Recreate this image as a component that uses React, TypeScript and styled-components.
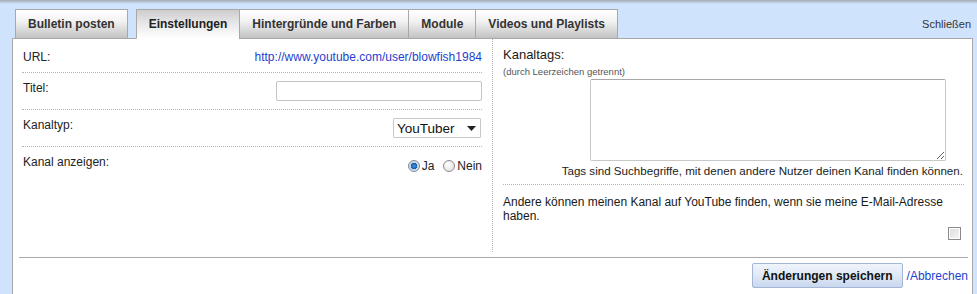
import React, { useState } from "react";
import styled, { createGlobalStyle, css } from "styled-components";

const GlobalStyle = createGlobalStyle`
  html, body {
    margin: 0;
    padding: 0;
  }
  body {
    font-family: "Liberation Sans", Arial, sans-serif;
    font-size: 12px;
    color: #222;
  }
`;

const tabs = [
  { id: "bulletin", label: "Bulletin posten" },
  { id: "settings", label: "Einstellungen" },
  { id: "colors", label: "Hintergründe und Farben" },
  { id: "modules", label: "Module" },
  { id: "videos", label: "Videos und Playlists" },
];

function App() {
  const [active, setActive] = useState("settings");
  const [title, setTitle] = useState("");
  const [tags, setTags] = useState("");
  const [channelType, setChannelType] = useState("YouTuber");
  const [visible, setVisible] = useState(true);
  const [findByMail, setFindByMail] = useState(false);

  return (
    <>
      <GlobalStyle />
      <Page>
        <Header>
          <TabList>
            {tabs.map((tab, i) => (
              <Tab
                key={tab.id}
                $active={tab.id === active}
                $spaced={i === 0}
                onClick={() => setActive(tab.id)}
              >
                {tab.label}
              </Tab>
            ))}
          </TabList>
          <CloseLink href="#">Schließen</CloseLink>
        </Header>

        <Panel>
          <Columns>
            <LeftColumn>
              <Row>
                <Label>URL:</Label>
                <Link href="#">http://www.youtube.com/user/blowfish1984</Link>
              </Row>
              <Row>
                <Label>Titel:</Label>
                <TextInput
                  type="text"
                  value={title}
                  onChange={(e) => setTitle(e.target.value)}
                />
              </Row>
              <Row>
                <Label>Kanaltyp:</Label>
                <SelectBox type="button" onClick={() => setChannelType("YouTuber")}>
                  <span>{channelType}</span>
                  <svg width="9" height="5" viewBox="0 0 9 5">
                    <path d="M0 0h9L4.5 5z" fill="#222" />
                  </svg>
                </SelectBox>
              </Row>
              <Row $last>
                <Label>Kanal anzeigen:</Label>
                <RadioGroup>
                  <RadioLabel>
                    <Radio
                      type="radio"
                      name="show"
                      checked={visible}
                      onChange={() => setVisible(true)}
                    />
                    Ja
                  </RadioLabel>
                  <RadioLabel>
                    <Radio
                      type="radio"
                      name="show"
                      checked={!visible}
                      onChange={() => setVisible(false)}
                    />
                    Nein
                  </RadioLabel>
                </RadioGroup>
              </Row>
            </LeftColumn>

            <RightColumn>
              <TagsSection>
                <BigLabel>Kanaltags:</BigLabel>
                <Hint>(durch Leerzeichen getrennt)</Hint>
                <TagsBox>
                  <TagsArea value={tags} onChange={(e) => setTags(e.target.value)} />
                </TagsBox>
                <HelpText>
                  Tags sind Suchbegriffe, mit denen andere Nutzer deinen Kanal finden können.
                </HelpText>
              </TagsSection>
              <MailSection>
                <MailText>
                  Andere können meinen Kanal auf YouTube finden, wenn sie meine E-Mail-Adresse
                  haben.
                </MailText>
                <CheckRow>
                  <Checkbox
                    type="checkbox"
                    checked={findByMail}
                    onChange={(e) => setFindByMail(e.target.checked)}
                  />
                </CheckRow>
              </MailSection>
            </RightColumn>
          </Columns>

          <Footer>
            <SaveButton type="button">Änderungen speichern</SaveButton>
            <CancelLink href="#">/Abbrechen</CancelLink>
          </Footer>
        </Panel>
      </Page>
    </>
  );
}

const Page = styled.div`
  min-height: 100vh;
  box-sizing: border-box;
  padding: 9px 4px 0 12px;
  background: linear-gradient(#a4a9b0 0, #c6d6ec 3px, #d0e3fc 4px) no-repeat;
  background-color: #d0e3fc;
  display: flex;
  flex-direction: column;
`;

const Header = styled.div`
  display: flex;
  align-items: center;
  justify-content: space-between;
  padding: 0 2px 0 3px;
  margin-bottom: -1px;
  position: relative;
  z-index: 1;
`;

const TabList = styled.div`
  display: flex;
`;

const Tab = styled.button<{ $active: boolean; $spaced: boolean }>`
  height: 30px;
  box-sizing: border-box;
  padding: 0 12px;
  margin: 0 ${(p) => (p.$spaced ? "9px" : "0")} 0 -1px;
  &:first-child {
    margin-left: 0;
  }
  border: 1px solid #a8a8a8;
  font-family: "Liberation Sans", Arial, sans-serif;
  font-size: 12px;
  font-weight: bold;
  color: #333;
  cursor: pointer;
  background: linear-gradient(#ffffff 0%, #f2f2f2 40%, #c2c2c2 100%);
  ${(p) =>
    p.$active &&
    css`
      background: linear-gradient(#cdcdcd 0%, #e6e6e6 45%, #ffffff 100%);
      border-bottom-color: #fff;
      color: #222;
    `}
`;

const CloseLink = styled.a`
  font-size: 11px;
  color: #333;
  text-decoration: none;
`;

const Panel = styled.div`
  flex: 1;
  background: #fff;
  border: 1px solid #a8a8a8;
  border-bottom: none;
  display: flex;
  flex-direction: column;
`;

const Columns = styled.div`
  display: flex;
  align-items: stretch;
`;

const LeftColumn = styled.div`
  width: 460px;
  padding: 3px 10px 0 9px;
  border-right: 1px dotted #b4b4b4;
`;

const Row = styled.div<{ $last?: boolean }>`
  display: flex;
  justify-content: space-between;
  align-items: flex-start;
  padding: 8px 0;
  border-bottom: ${(p) => (p.$last ? "none" : "1px dotted #b4b4b4")};
`;

const Label = styled.span`
  font-size: 12px;
  line-height: 14px;
  padding-left: 1px;
`;

const Link = styled.a`
  font-size: 12px;
  line-height: 14px;
  color: #1f3fcf;
  text-decoration: none;
`;

const TextInput = styled.input`
  width: 206px;
  height: 20px;
  box-sizing: border-box;
  border: 1px solid #c4c4c4;
  border-radius: 2px;
  padding: 0 4px;
  font-family: inherit;
  font-size: 12px;
  outline: none;
`;

const SelectBox = styled.button`
  width: 88px;
  height: 20px;
  box-sizing: border-box;
  margin-right: 1px;
  display: flex;
  align-items: center;
  justify-content: space-between;
  padding: 0 4px 0 3px;
  border: 1px solid #c8c8c8;
  border-radius: 1px;
  background: #fff;
  font-family: "Liberation Sans", Arial, sans-serif;
  font-size: 13.5px;
  color: #111;
  cursor: pointer;
`;

const RadioGroup = styled.div`
  display: flex;
  gap: 9px;
  margin-top: 4px;
`;

const RadioLabel = styled.label`
  display: flex;
  align-items: center;
  gap: 2px;
  font-size: 12px;
  line-height: 14px;
`;

const Radio = styled.input`
  appearance: none;
  margin: 0;
  width: 12px;
  height: 12px;
  border-radius: 50%;
  border: 1px solid #8c8c8c;
  background: radial-gradient(circle at 40% 35%, #ffffff 0%, #dcdcdc 100%);
  &:checked {
    border-color: #7a8a9a;
    background: radial-gradient(circle, #3d9be8 0, #1a5aa8 3px, #c9d3dc 3.5px, #e8edf2 100%);
  }
`;

const RightColumn = styled.div`
  flex: 1;
  padding: 9px 8px 12px 10px;
`;

const TagsSection = styled.div`
  padding-bottom: 6px;
  border-bottom: 1px dotted #b4b4b4;
`;

const BigLabel = styled.div`
  font-size: 13px;
  line-height: 14px;
  color: #1a1a1a;
`;

const Hint = styled.div`
  font-size: 9.5px;
  line-height: 11px;
  margin-top: 4px;
  color: #555;
`;

const TagsBox = styled.div`
  display: flex;
  justify-content: flex-end;
  padding-right: 18px;
  margin-top: 2px;
`;

const TagsArea = styled.textarea`
  width: 356px;
  height: 82px;
  box-sizing: border-box;
  border: 1px solid #c8c8c8;
  border-top-color: #a8a8a8;
  border-radius: 2px;
  font-family: inherit;
  font-size: 12px;
  outline: none;
`;

const HelpText = styled.div`
  text-align: right;
  font-size: 11.6px;
  line-height: 14px;
  margin-top: 3px;
  padding-right: 1px;
  color: #222;
`;

const MailSection = styled.div`
  padding-top: 10px;
`;

const MailText = styled.div`
  font-size: 12px;
  line-height: 14px;
  color: #1a1a1a;
`;

const CheckRow = styled.div`
  display: flex;
  justify-content: flex-end;
  padding-right: 3px;
  margin-top: 4px;
`;

const Checkbox = styled.input`
  appearance: none;
  margin: 0;
  width: 13px;
  height: 13px;
  box-sizing: border-box;
  border: 1px solid #8a8a8a;
  background: linear-gradient(135deg, #dcdcdc, #f6f6f6);
  box-shadow: inset 0 0 0 1px #fff;
`;

const Footer = styled.div`
  display: flex;
  justify-content: flex-end;
  align-items: center;
  gap: 4px;
  margin: 5px 4px 0 6px;
  padding-top: 5px;
  border-top: 1px solid #aaaaaa;
`;

const SaveButton = styled.button`
  height: 25px;
  padding: 0 9px;
  border: 1px solid #a3b6d6;
  border-radius: 2px;
  background: linear-gradient(#f0f4fb 0%, #dfe8f6 50%, #c9d7ee 100%);
  font-family: "Liberation Sans", Arial, sans-serif;
  font-size: 12px;
  font-weight: bold;
  color: #111;
  cursor: pointer;
`;

const CancelLink = styled.a`
  font-size: 12px;
  color: #1f3fcf;
  text-decoration: none;
`;

export default App;
